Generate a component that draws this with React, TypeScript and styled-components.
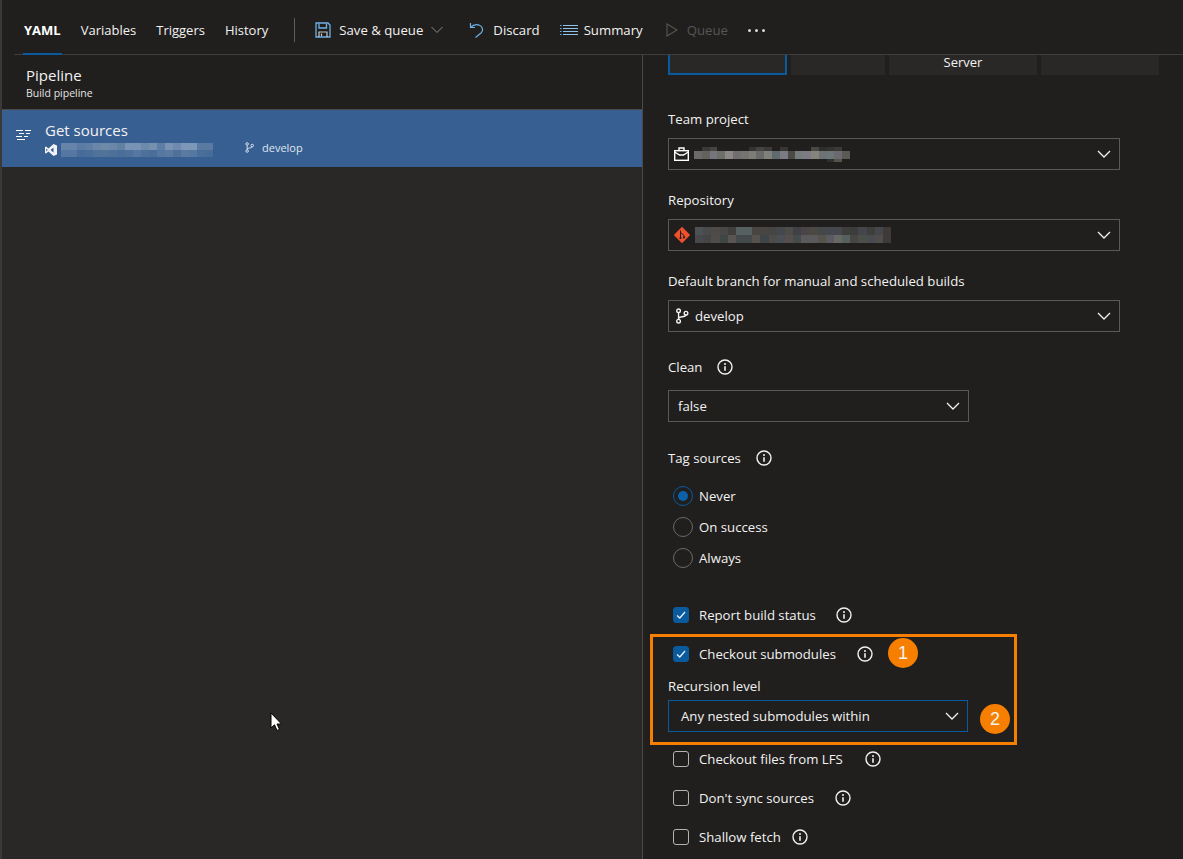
import React from "react";
import styled, { createGlobalStyle } from "styled-components";

const Global = createGlobalStyle`
  html, body { margin: 0; padding: 0; background: #201f1e; }
  * { box-sizing: border-box; }
`;

const Page = styled.div`
  position: relative;
  width: 1183px;
  height: 859px;
  overflow: hidden;
  display: flex;
  flex-direction: column;
  background: #201f1e;
  border-left: 2px solid #3a3938;
  color: #f3f2f1;
  font-family: "Open Sans", "Noto Sans", sans-serif;
  font-size: 13.2px;
`;

const TopBar = styled.div`
  height: 55px;
  flex: none;
  margin-left: 12px;
  padding-left: 9px;
  display: flex;
  align-items: stretch;
  border-bottom: 1px solid #3f3e3c;
`;

const Tab = styled.div<{ $active?: boolean }>`
  display: flex;
  align-items: center;
  height: 55px;
  padding: 7px 1px 0;
  margin-right: 18px;
  font-size: 13px;
  font-weight: ${(p) => (p.$active ? 700 : 400)};
  color: ${(p) => (p.$active ? "#ffffff" : "#f3f2f1")};
  border-bottom: 2px solid ${(p) => (p.$active ? "#0a5a9e" : "transparent")};
`;

const BarDivider = styled.div`
  width: 1px;
  height: 24px;
  background: #5f5e5c;
  align-self: center;
  margin: 6px 20px 0 7px;
`;

const Command = styled.div<{ $disabled?: boolean; $gap?: number; $right?: number }>`
  display: flex;
  align-items: center;
  padding-top: 5px;
  gap: ${(p) => p.$gap ?? 8}px;
  margin-right: ${(p) => p.$right ?? 20}px;
  color: ${(p) => (p.$disabled ? "#575654" : "#f3f2f1")};
`;

const Columns = styled.div`
  flex: 1;
  min-height: 0;
  display: flex;
`;

const LeftPane = styled.div`
  width: 640px;
  flex: none;
  display: flex;
  flex-direction: column;
  background: #292827;
`;

const PipelineHead = styled.div`
  height: 55px;
  flex: none;
  padding: 10px 0 0 24px;
  background: #201f1e;
  border-bottom: 1px solid #4a4947;
`;

const PipelineTitle = styled.div`
  font-size: 15px;
  line-height: 20px;
`;

const PipelineSub = styled.div`
  font-size: 10.5px;
  line-height: 16px;
  color: #e4e3e2;
`;

const SourcesRow = styled.div`
  height: 57px;
  flex: none;
  display: flex;
  align-items: flex-start;
  background: #385f92;
  padding: 11px 0 0 14px;
`;

const SourcesIconSlot = styled.div`
  margin-top: 8px;
  display: flex;
`;

const RowBody = styled.div`
  margin-left: 14px;
  display: flex;
  flex-direction: column;
`;

const RowTitle = styled.div`
  font-size: 15px;
  line-height: 18px;
`;

const RowMeta = styled.div`
  display: flex;
  align-items: center;
  height: 16px;
  margin-top: 3px;
  gap: 4px;
`;

const BranchTag = styled.div`
  display: flex;
  align-items: center;
  gap: 7px;
  margin: 0 0 5px 27px;
  font-size: 11px;
  color: #dfe6ef;
`;

const RightPane = styled.div`
  flex: 1;
  min-width: 0;
  border-left: 1px solid #4a4947;
  padding-left: 25px;
`;

const SourceTabs = styled.div`
  display: flex;
  gap: 4px;
  height: 20px;
  margin-bottom: 34px;
`;

const SourceTab = styled.div<{ $w: number; $active?: boolean }>`
  width: ${(p) => p.$w}px;
  height: 20px;
  background: #292827;
  text-align: center;
  line-height: 14px;
  font-size: 13px;
  border: ${(p) => (p.$active ? "2px solid #0a5a9e" : "none")};
  border-top: none;
`;

const FieldLabel = styled.div<{ $top?: number; $bottom?: number }>`
  display: flex;
  align-items: center;
  gap: 15px;
  height: 20px;
  margin-top: ${(p) => p.$top ?? 0}px;
  margin-bottom: ${(p) => p.$bottom ?? 9}px;
`;

const SelectBox = styled.div<{ $w?: number; $focus?: boolean; $pad?: number }>`
  width: ${(p) => p.$w ?? 452}px;
  height: 32px;
  display: flex;
  align-items: center;
  position: relative;
  padding-left: ${(p) => p.$pad ?? 5}px;
  gap: 5px;
  border: 1px solid ${(p) => (p.$focus ? "#0a5a9e" : "#5a5957")};
`;

const Chevron = styled.svg`
  position: absolute;
  right: 8px;
  top: 9px;
`;

const Radios = styled.div`
  display: flex;
  flex-direction: column;
  gap: 11px;
  margin: 18px 0 0 5px;
`;

const RadioRow = styled.div`
  display: flex;
  align-items: center;
  gap: 6px;
  height: 20px;
`;

const RadioDot = styled.div<{ $on?: boolean }>`
  width: 20px;
  height: 20px;
  border-radius: 50%;
  border: 1px solid ${(p) => (p.$on ? "#0a5a9e" : "#6b6a68")};
  display: flex;
  align-items: center;
  justify-content: center;
  &::after {
    content: "";
    width: 10px;
    height: 10px;
    border-radius: 50%;
    background: ${(p) => (p.$on ? "#0a62ab" : "transparent")};
  }
`;

const CheckRow = styled.div<{ $top?: number }>`
  display: flex;
  align-items: center;
  height: 20px;
  margin: ${(p) => p.$top ?? 0}px 0 0 5px;
  gap: 10px;
`;

const CheckBox = styled.div<{ $on?: boolean }>`
  width: 16px;
  height: 16px;
  flex: none;
  border-radius: 3px;
  display: flex;
  align-items: center;
  justify-content: center;
  background: ${(p) => (p.$on ? "#0a5a9e" : "transparent")};
  border: 1px solid ${(p) => (p.$on ? "#0a5a9e" : "#b5b4b2")};
`;

const CheckText = styled.span<{ $after: number }>`
  margin-right: ${(p) => p.$after}px;
`;

const Highlight = styled.div`
  position: relative;
  width: 367px;
  height: 111px;
  margin: 9px 0 4px -18px;
  padding: 7px 0 0 15px;
  border: 3px solid #f77f00;
`;

const Badge = styled.div<{ $x: number; $y: number }>`
  position: absolute;
  left: ${(p) => p.$x}px;
  top: ${(p) => p.$y}px;
  width: 30px;
  height: 30px;
  border-radius: 50%;
  background: #f77f00;
  display: flex;
  align-items: center;
  justify-content: center;
  font-family: "Liberation Sans", sans-serif;
  font-size: 18px;
`;

const Cursor = styled.svg`
  position: absolute;
  left: 268px;
  top: 712px;
`;

const InfoIcon = () => (
  <svg width="16" height="16" viewBox="0 0 16 16" fill="none">
    <circle cx="8" cy="8" r="7" stroke="#f3f2f1" strokeWidth="1.4" />
    <circle cx="8" cy="5" r="1" fill="#f3f2f1" />
    <path d="M8 7.2V11.8" stroke="#f3f2f1" strokeWidth="1.6" />
  </svg>
);

const BranchIcon = ({ size = 16, color = "#f3f2f1" }: { size?: number; color?: string }) => (
  <svg width={size} height={size} viewBox="0 0 14 14" fill="none" stroke={color} strokeWidth="1.2">
    <circle cx="4" cy="2.5" r="1.6" />
    <circle cx="4" cy="11.5" r="1.6" />
    <circle cx="10.5" cy="4.5" r="1.6" />
    <path d="M4 4.1V9.9M4 9C4.5 7.2 10 8.2 10.5 6.1" />
  </svg>
);

const CheckMark = () => (
  <svg width="12" height="12" viewBox="0 0 12 12" fill="none">
    <path d="M2 6.5L4.8 9L10 3" stroke="#e8f1fa" strokeWidth="1.3" />
  </svg>
);

const ChevronDown = () => (
  <Chevron width="14" height="12" viewBox="0 0 14 12" fill="none">
    <path d="M1 3L7 9L13 3" stroke="#f3f2f1" strokeWidth="1.3" />
  </Chevron>
);

const SaveIcon = () => (
  <svg width="16" height="16" viewBox="0 0 16 16" fill="none">
    <path d="M1 1H13L15 3V15H1Z" stroke="#6fb0e6" strokeWidth="1.3" />
    <path d="M4 1.5V6H11.5V1.5" stroke="#6fb0e6" strokeWidth="1.3" />
    <path d="M4 15V10H12V15M6.5 11.5V14" stroke="#c8c6c4" strokeWidth="1.2" />
  </svg>
);

const UndoIcon = () => (
  <svg width="15" height="16" viewBox="0 0 15 16" fill="none" stroke="#6fb0e6" strokeWidth="1.2">
    <path d="M1.5 1V5.5H6" />
    <path d="M1.5 5.5C4 2.8 7.5 2 10.5 3.2C14 4.8 14.5 8.6 12 11L6.5 15.5" />
  </svg>
);

const ListIcon = () => (
  <svg width="18" height="12" viewBox="0 0 18 12" fill="none">
    <path d="M0 1.5H1.5M0 4.5H1.5M0 7.5H1.5M0 10.5H1.5" stroke="#6fb0e6" />
    <path d="M3 1.5H18M3 4.5H18M3 7.5H18M3 10.5H18" stroke="#8fc3ee" />
  </svg>
);

const PlayIcon = () => (
  <svg width="12" height="14" viewBox="0 0 12 14" fill="none">
    <path d="M1 1L11 7L1 13Z" stroke="#575654" strokeWidth="1.1" />
  </svg>
);

const ChevronSmall = () => (
  <svg width="12" height="8" viewBox="0 0 12 8" fill="none">
    <path d="M0.5 1L6 6.5L11.5 1" stroke="#8a8987" />
  </svg>
);

const Dots = () => (
  <svg width="17" height="5" viewBox="0 0 17 5" fill="#d8d7d5">
    <rect x="0" y="2" width="3" height="3" rx="1.5" />
    <rect x="7" y="2" width="3" height="3" rx="1.5" />
    <rect x="14" y="2" width="3" height="3" rx="1.5" />
  </svg>
);

const GetSourcesIcon = () => (
  <svg width="15" height="12" viewBox="0 0 15 12" fill="none" stroke="#ffffff" strokeWidth="1.1">
    <path d="M0 1.5H7M9 1.5H15M3 4.5H8M10 4.5H14M0 7.5H6M8 7.5H12M1 10.5H9" />
  </svg>
);

const VsIcon = () => (
  <svg width="12" height="12" viewBox="0 0 12 12" fill="#f1f3f7">
    <path d="M8.5 0L12 1.5V10.5L8.5 12L3.5 7.5L1 9.5L0 9V3L1 2.5L3.5 4.5ZM8.5 3.5L5.5 6L8.5 8.5ZM1.3 4.5V7.5L2.8 6Z" fillRule="evenodd" />
  </svg>
);

const BriefcaseIcon = () => (
  <svg width="15" height="14" viewBox="0 0 15 14" fill="none" stroke="#ffffff" strokeWidth="1.4">
    <rect x="0.7" y="3.7" width="13.6" height="9.6" />
    <path d="M5 3.5V1H10V3.5M0.7 5L5.5 8H9.5L14.3 5" />
  </svg>
);

const GitIcon = () => (
  <svg width="16" height="16" viewBox="0 0 16 16">
    <path d="M8 0.8L15.2 8L8 15.2L0.8 8Z" fill="#f0512c" stroke="#f0512c" strokeWidth="1.4" strokeLinejoin="round" />
    <path d="M6.5 3.5V12M6.5 5.5L10 8.5V11" stroke="#201f1e" strokeWidth="1" fill="none" />
    <circle cx="6.5" cy="11" r="1.1" fill="#201f1e" />
    <circle cx="10" cy="10.5" r="1.1" fill="#201f1e" />
  </svg>
);

// pixelated (redacted) names, one array per row, null leaves a gap
const Mosaic = ({ rows, cell = 8, heights }: { rows: (string | null)[][]; cell?: number; heights?: number[] }) => {
  const hs = heights ?? rows.map(() => 8);
  let y = 0;
  return (
    <svg width={rows[0].length * cell} height={hs.reduce((a, b) => a + b, 0)} shapeRendering="crispEdges">
      {rows.map((row, r) => {
        const top = y;
        y += hs[r];
        return row.map((c, x) =>
          c ? <rect key={`${x}-${r}`} x={x * cell} y={top} width={cell} height={hs[r]} fill={c} /> : null
        );
      })}
    </svg>
  );
};

const teamRows = [
  [null, "#3a3a38", "#464543", null, null, null, null, "#333331", "#454442", "#3b3a38", null, "#373634", null, null, null, "#4a4845", "#2e2e2c", "#333331", "#3a3936", null],
  ["#6a6a6a", "#63625f", "#76747c", "#6c6e68", "#8a8987", "#706f6d", "#757470", "#7d7c75", "#696968", "#80807a", "#5e6a6c", "#7b7b85", "#4c4a44", "#767b7d", "#7d7a83", "#83847a", "#6e7274", "#6a7678", "#6a6a70", "#5c5a54"],
  [null, null, null, null, null, null, null, null, null, null, null, null, null, null, null, null, null, "#2c322f", "#55534a", null],
];

const repoRows = [
  ["#4c5254", "#4a4a4c", "#4f4a4a", "#4a4846", "#403f3e", "#566060", "#566060", "#484542", "#474644", "#464543", "#44484c", "#4e4c48", "#3f4144", "#4a4448", "#4a4a42", "#44484a", "#44484c", "#44484c", "#3e3e3c", "#3c3c3a", "#45454d", "#3e3e3a", "#44484c", "#3e3a38"],
  ["#45494b", "#454545", "#504c4a", "#3f4745", "#5a5452", "#44494b", "#44494b", "#55534c", "#3f444a", "#4d4c48", "#4a4f55", "#544f4c", "#454a4c", "#5a5a5a", "#5a5a5c", "#55534c", "#5a5a62", "#666864", "#56605f", "#484644", "#4c4e48", "#484c50", "#504c4a", "#3e3a38"],
];

const pipelineRows = [
  ["#6684aa", "#6684aa", "#5b7ba4", "#5f7fa6", "#6a86a8", "#6f8aa9", "#6a86a8", "#62809f", "#7893b4", "#7893b4", "#6c8aaa", "#7690b0", "#5d7ea6", "#7893b4", "#6f8aae", "#7d97b8", "#7d97b8", "#5a7aa2", "#5a7aa2"],
  ["#5577a2", "#5577a2", "#476c9a", "#4a6e9b", "#527399", "#527399", "#4e7099", "#4a6e9b", "#4e7099", "#5577a2", "#4e7099", "#4a6e9b", "#5577a2", "#5a7aa2", "#4e7099", "#5a7aa2", "#5577a2", "#4a6e9b", "#476c9a"],
];

export default function App() {
  return (
    <Page>
      <Global />
      <TopBar>
        <Tab $active>YAML</Tab>
        <Tab>Variables</Tab>
        <Tab>Triggers</Tab>
        <Tab>History</Tab>
        <BarDivider />
        <Command $right={26}>
          <SaveIcon />
          Save &amp; queue
          <ChevronSmall />
        </Command>
        <Command $gap={9}>
          <UndoIcon />
          Discard
        </Command>
        <Command $gap={6} $right={23}>
          <ListIcon />
          Summary
        </Command>
        <Command $disabled $gap={9} $right={20}>
          <PlayIcon />
          Queue
        </Command>
        <Command>
          <Dots />
        </Command>
      </TopBar>
      <Columns>
        <LeftPane>
          <PipelineHead>
            <PipelineTitle>Pipeline</PipelineTitle>
            <PipelineSub>Build pipeline</PipelineSub>
          </PipelineHead>
          <SourcesRow>
            <SourcesIconSlot>
              <GetSourcesIcon />
            </SourcesIconSlot>
            <RowBody>
              <RowTitle>Get sources</RowTitle>
              <RowMeta>
                <VsIcon />
                <Mosaic rows={pipelineRows} heights={[7, 7]} />
                <BranchTag>
                  <BranchIcon size={11} color="#dfe6ef" />
                  develop
                </BranchTag>
              </RowMeta>
            </RowBody>
          </SourcesRow>
        </LeftPane>
        <RightPane>
          <SourceTabs>
            <SourceTab $w={119} $active />
            <SourceTab $w={94} />
            <SourceTab $w={148}>Server</SourceTab>
            <SourceTab $w={118} />
          </SourceTabs>
          <FieldLabel>Team project</FieldLabel>
          <SelectBox>
            <BriefcaseIcon />
            <Mosaic rows={teamRows} cell={7.8} heights={[4, 8, 3]} />
            <ChevronDown />
          </SelectBox>
          <FieldLabel $top={20}>Repository</FieldLabel>
          <SelectBox>
            <GitIcon />
            <Mosaic rows={repoRows} cell={8.17} />
            <ChevronDown />
          </SelectBox>
          <FieldLabel $top={20}>Default branch for manual and scheduled builds</FieldLabel>
          <SelectBox>
            <BranchIcon />
            develop
            <ChevronDown />
          </SelectBox>
          <FieldLabel $top={25} $bottom={13}>
            Clean
            <InfoIcon />
          </FieldLabel>
          <SelectBox $w={301} $pad={9}>
            false
            <ChevronDown />
          </SelectBox>
          <FieldLabel $top={26}>
            Tag sources
            <InfoIcon />
          </FieldLabel>
          <Radios>
            <RadioRow>
              <RadioDot $on />
              Never
            </RadioRow>
            <RadioRow>
              <RadioDot />
              On success
            </RadioRow>
            <RadioRow>
              <RadioDot />
              Always
            </RadioRow>
          </Radios>
          <CheckRow $top={37}>
            <CheckBox $on>
              <CheckMark />
            </CheckBox>
            <CheckText $after={10}>Report build status</CheckText>
            <InfoIcon />
          </CheckRow>
          <Highlight>
            <CheckRow>
              <CheckBox $on>
                <CheckMark />
              </CheckBox>
              <CheckText $after={11}>Checkout submodules</CheckText>
              <InfoIcon />
            </CheckRow>
            <FieldLabel $top={12} $bottom={4}>Recursion level</FieldLabel>
            <SelectBox $w={300} $focus $pad={12}>
              Any nested submodules within
              <ChevronDown />
            </SelectBox>
            <Badge $x={235} $y={1}>1</Badge>
            <Badge $x={327} $y={67}>2</Badge>
          </Highlight>
          <CheckRow>
            <CheckBox />
            <CheckText $after={12}>Checkout files from LFS</CheckText>
            <InfoIcon />
          </CheckRow>
          <CheckRow $top={19}>
            <CheckBox />
            <CheckText $after={11}>Don't sync sources</CheckText>
            <InfoIcon />
          </CheckRow>
          <CheckRow $top={19}>
            <CheckBox />
            <CheckText $after={1}>Shallow fetch</CheckText>
            <InfoIcon />
          </CheckRow>
        </RightPane>
      </Columns>
      <Cursor width="12" height="20" viewBox="0 0 12 20">
        <path d="M1 1V16L4.5 12.8L7 18.5L9.5 17.4L7 12H11.5Z" fill="#ffffff" stroke="#000000" strokeWidth="1" />
      </Cursor>
    </Page>
  );
}
